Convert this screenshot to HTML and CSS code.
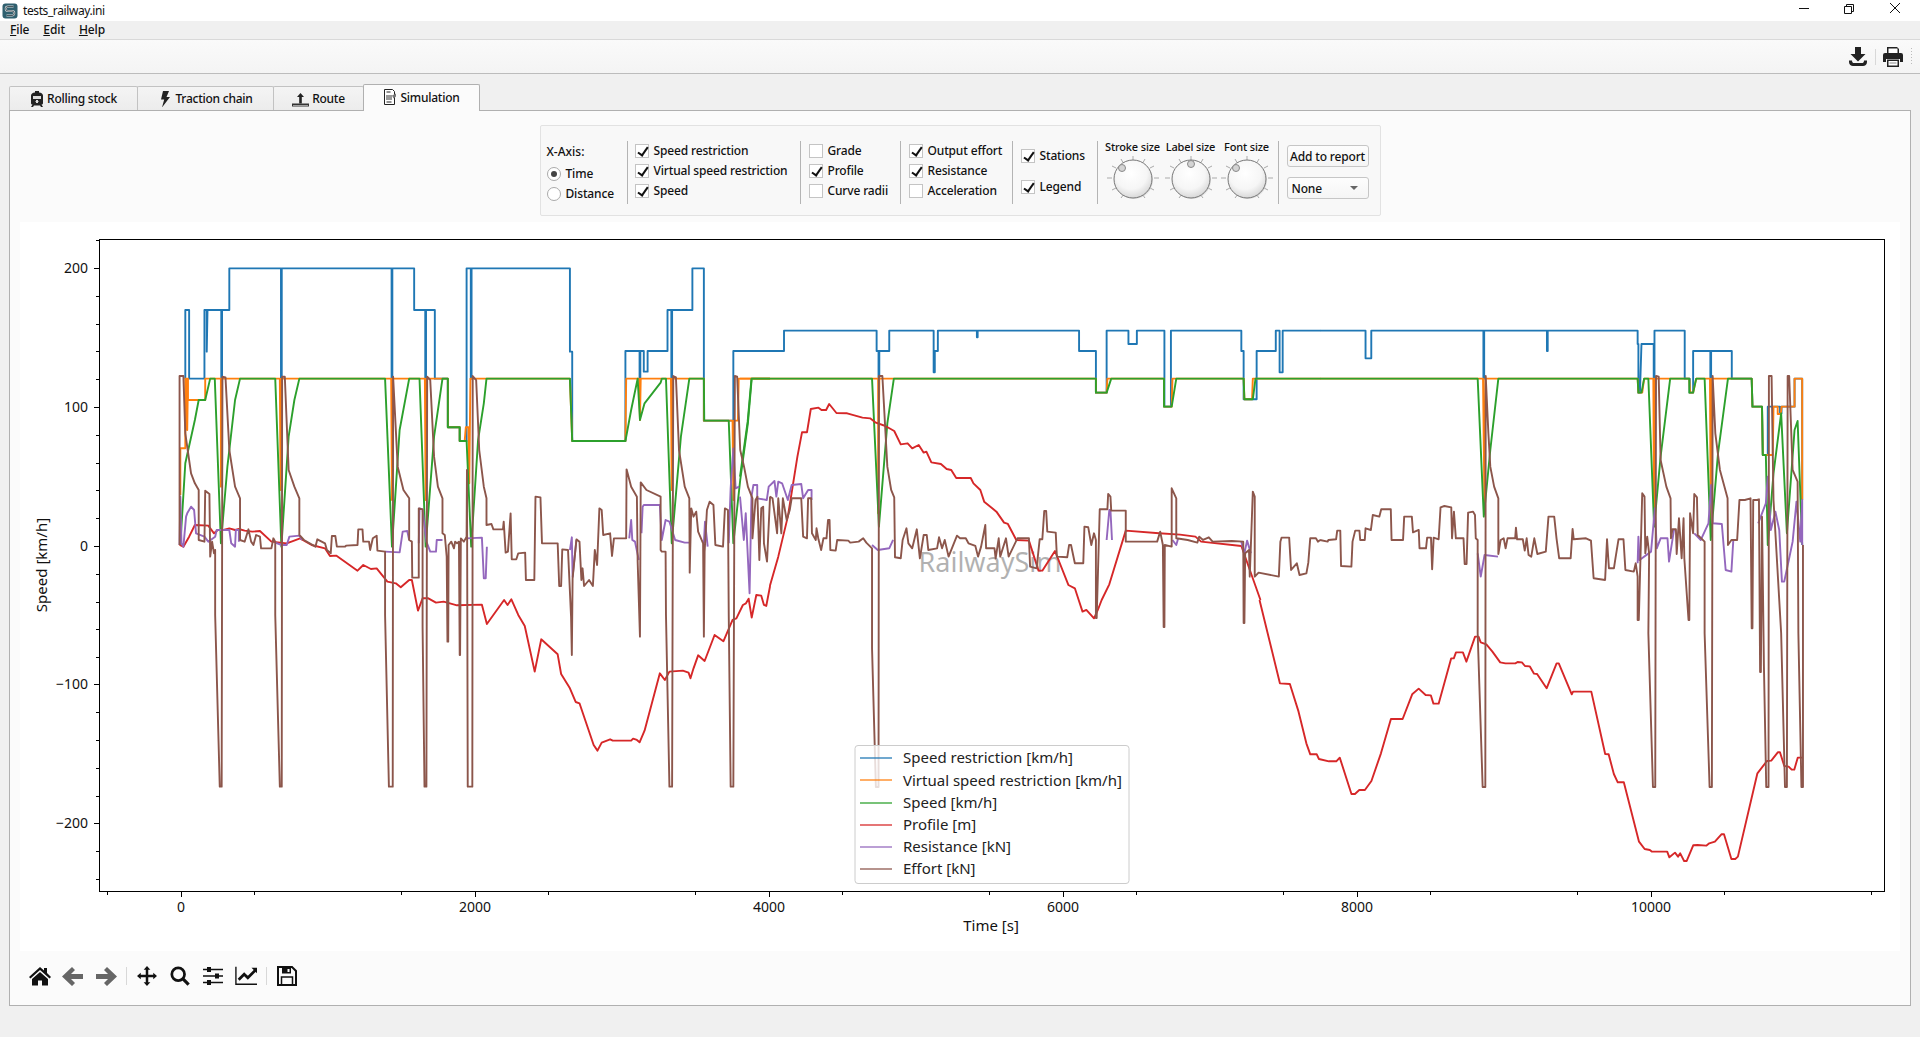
FILE: index.html
```html
<!DOCTYPE html>
<html lang="en">
<head>
<meta charset="utf-8">
<title>tests_railway.ini</title>
<link rel="stylesheet" href="styles.css">
</head>
<body>
<div class="app">
  <header class="titlebar">
    <svg class="appicon" viewBox="0 0 16 16"><rect x="0.5" y="0.5" width="15" height="15" rx="3" fill="#2f5f6e"/><path d="M11.5 3.5H6a2 2 0 0 0 0 4.500h4a2 2 0 0 1 0 4.500H4.500" fill="none" stroke="#d5dde0" stroke-width="2"/><path d="M11.500 3.500H6a2 2 0 0 0 0 4.500h4a2 2 0 0 1 0 4.500H4.500" fill="none" stroke="#26343a" stroke-width=".8"/></svg>
    <span class="titletext">tests_railway.ini</span>
    <div class="winbtns">
      <svg class="winbtn" viewBox="0 0 46 20"><path d="M19 8.500h10" stroke="#111" fill="none"/></svg>
      <svg class="winbtn" viewBox="0 0 46 20"><path d="M18.500 6.500h7v7h-7zM20.500 6.500v-2h7v7h-2" stroke="#111" fill="none"/></svg>
      <svg class="winbtn" viewBox="0 0 46 20"><path d="M18 3l10 10M28 3L18 13" stroke="#111" fill="none"/></svg>
    </div>
  </header>
  <nav class="menubar">
    <span class="menuitem"><u>F</u>ile</span>
    <span class="menuitem"><u>E</u>dit</span>
    <span class="menuitem"><u>H</u>elp</span>
  </nav>
  <div class="toolbar">
    <svg class="topicon" viewBox="0 0 20 20"><path d="M7 0h6v7h4.500L10 14.500 2.500 7H7z" fill="#222"/><path d="M1 13.500v1.500c0 2.500 2 4 4 4h10c2 0 4-1.500 4-4v-1.500l-3 0c0 2-1 2.500-2 2.500H6c-1 0-2-.5-2-2.500z" fill="#222"/></svg>
    <span class="topsep"></span>
    <svg class="topicon" viewBox="0 0 20 20"><path d="M4 0h10l2 2v5H4z" fill="#222"/><rect x="5.500" y="1.500" width="9" height="5" fill="#fff"/><path d="M2 6h16a2 2 0 0 1 2 2v7h-3v-3H3v3H0V8a2 2 0 0 1 2-2z" fill="#222"/><path d="M4 12.500h12V20H4z" fill="#222"/><path d="M5.500 14h9v4.500h-9z" fill="#fff"/><path d="M6.500 15.500h7v1h-7z" fill="#888"/></svg>
    <span class="grip"></span>
  </div>
  <main class="workspace">
    <div class="tabs">
      <div class="tab">
        <svg class="tabicon" viewBox="0 0 14 16"><path d="M5 0h4v1.500c2.500 0 4 1.500 4 3V12c0 1-.7 1.500-1.500 1.500l1.500 2.500h-2l-1-1.500H4L3 16H1l1.500-2.500C1.700 13.500 1 13 1 12V4.500c0-1.500 1.500-3 4-3z" fill="#222"/><path d="M3 5h8v3H3z" fill="#ddd"/><path d="M6 9h2v3H6zM5.500 10h3v1h-3z" fill="#ddd"/></svg>
        <span>Rolling stock</span>
      </div>
      <div class="tab">
        <svg class="tabicon" viewBox="0 0 14 16"><path d="M5 0h6L8.500 6H12L4 16.500 6.200 8.500H3z" fill="#222"/></svg>
        <span>Traction chain</span>
      </div>
      <div class="tab">
        <svg class="tabicon tabicon-wide" viewBox="0 0 17 16"><path d="M8.500 2l3.500 4H9.800v6.500H7.200V6H5z" fill="#222"/><path d="M0 12.500h17v3H0z" fill="#333"/><path d="M1 14h15v.8H1z" fill="#bbb"/></svg>
        <span>Route</span>
      </div>
      <div class="tab tab-active">
        <svg class="tabicon" viewBox="0 0 14 16"><path d="M1.500.5h8l2 2v13h-10z" fill="#fff" stroke="#222"/><path d="M3.500 3h4M3.500 13h5" stroke="#222"/><path d="M3 6h6v5H3z" fill="#999"/><path d="M9 6.500l4-2v3l-2.500 2z" fill="#777"/></svg>
        <span>Simulation</span>
      </div>
    </div>
    <section class="pane">
      <div class="controlrow">
        <form class="controls">
          <div class="group group-axis">
            <span class="axislabel">X-Axis:</span>
            <label class="opt"><span class="radio radio-on"></span>Time</label>
            <label class="opt"><span class="radio"></span>Distance</label>
          </div>
          <div class="group group-speed">
            <label class="opt"><span class="check check-on"></span>Speed restriction</label>
            <label class="opt"><span class="check check-on"></span>Virtual speed restriction</label>
            <label class="opt"><span class="check check-on"></span>Speed</label>
          </div>
          <div class="group group-profile">
            <label class="opt"><span class="check"></span>Grade</label>
            <label class="opt"><span class="check check-on"></span>Profile</label>
            <label class="opt"><span class="check"></span>Curve radii</label>
          </div>
          <div class="group group-effort">
            <label class="opt"><span class="check check-on"></span>Output effort</label>
            <label class="opt"><span class="check check-on"></span>Resistance</label>
            <label class="opt"><span class="check"></span>Acceleration</label>
          </div>
          <div class="group group-extra">
            <label class="opt"><span class="check check-on"></span>Stations</label>
            <label class="opt"><span class="check check-on"></span>Legend</label>
          </div>
          <div class="group group-knobs">
            <div class="knob knob-stroke">
              <span class="knoblabel">Stroke size</span>
              <svg class="knobsvg" viewBox="0 0 52 44"><use href="#knobface"/><circle cx="15" cy="12" r="3.500" class="knobdot"/></svg>
            </div>
            <div class="knob knob-label">
              <span class="knoblabel">Label size</span>
              <svg class="knobsvg" viewBox="0 0 52 44"><use href="#knobface"/><circle cx="26" cy="8" r="3.500" class="knobdot"/></svg>
            </div>
            <div class="knob knob-font">
              <span class="knoblabel">Font size</span>
              <svg class="knobsvg" viewBox="0 0 52 44"><use href="#knobface"/><circle cx="15" cy="12" r="3.500" class="knobdot"/></svg>
            </div>
          </div>
          <div class="group group-report">
            <span class="btn">Add to report</span>
            <span class="combo">None<i class="caret"></i></span>
          </div>
        </form>
      </div>

      <svg class="defs" width="0" height="0" aria-hidden="true">
        <defs>
          <radialGradient id="knobgrad" cx="45%" cy="35%" r="70%">
            <stop offset="0" stop-color="#ffffff"/><stop offset=".6" stop-color="#f6f6f6"/><stop offset="1" stop-color="#d2d2d2"/>
          </radialGradient>
          <g id="knobface">
            <path d="M26 0v4M14 3l2 3.500M38 3l-2 3.500M5 10l4 2M47 10l-4 2M0 22h5M47 22h5M5 34l4-2M47 34l-4-2M14 42l3-4M38 42l-3-4" stroke="#aaa" fill="none"/>
            <circle cx="27" cy="24" r="19" fill="#ccc" opacity=".5"/>
            <circle cx="26" cy="23" r="19" fill="url(#knobgrad)" stroke="#777"/>
          </g>
        </defs>
      </svg>

      <div class="figure">
        <svg class="plot" viewBox="20 222 1880 729">
          <!-- axes ticks -->
          <path class="ticks" d="M107.500 891v4M254.500 891v4M401.500 891v4M548.500 891v4M695.500 891v4M842.500 891v4M989.500 891v4M1136.500 891v4M1283.500 891v4M1430.500 891v4M1577.500 891v4M1724.500 891v4M1871.500 891v4"/>
          <path class="ticks" d="M181.500 891v6M475.500 891v6M769.500 891v6M1063.500 891v6M1357.500 891v6M1651.500 891v6"/>
          <path class="ticks" d="M94 268.500h5M94 407.500h5M94 546.500h5M94 684.500h5M94 823.500h5"/>
          <path class="ticks" d="M96 240.500h3M96 296.500h3M96 324.500h3M96 351.500h3M96 379.500h3M96 435.500h3M96 463.500h3M96 490.500h3M96 518.500h3M96 574.500h3M96 602.500h3M96 629.500h3M96 657.500h3M96 712.500h3M96 740.500h3M96 768.500h3M96 796.500h3M96 851.500h3M96 879.500h3"/>
          <text class="tl yl" x="88" y="273">200</text>
          <text class="tl yl" x="88" y="412">100</text>
          <text class="tl yl" x="88" y="551">0</text>
          <text class="tl yl" x="88" y="689">−100</text>
          <text class="tl yl" x="88" y="828">−200</text>
          <text class="tl xl" x="181" y="912">0</text>
          <text class="tl xl" x="475" y="912">2000</text>
          <text class="tl xl" x="769" y="912">4000</text>
          <text class="tl xl" x="1063" y="912">6000</text>
          <text class="tl xl" x="1357" y="912">8000</text>
          <text class="tl xl" x="1651" y="912">10000</text>
          <text class="al" x="991" y="931">Time [s]</text>
          <text class="al" transform="translate(47 565) rotate(-90)">Speed [km/h]</text>
          <text class="watermark" x="990" y="572">RailwaySim</text>

          <!-- series traced in horizontal sections -->
          <g class="sec-a">
            <polyline class="s s-blue" points="40,386 40,180 50,180 50,386 90,386 90,180 96,180 96,305 98,180 134,180 134,386 136,386 136,180 155,180 155,55 290,55 290,386 292,386 292,55 579,55 579,386 581,386 581,55 638,55 638,180 667,180 667,386 669,386 669,180 692,180 692,386 726,386 726,532 757,532 757,573 775,573 775,55 786,55 786,386 788,386 788,55 1045,55 1045,305 1051,305 1051,573 1190,573 1190,303 1227,303 1227,386 1229,386 1229,303 1238,303 1238,365 1248,365 1248,303 1300,303 1300,180 1310,180 1310,386 1312,386 1312,180 1365,180 1365,55 1395,55 1395,512 1472,512 1472,303 1568,303"/>
            <polyline class="s s-orange" points="27,735 27,595 40,595 40,386 45,386 45,540 47,386 47,450 92,450 92,386 133,386 133,710 135,386 287,386 289,720 291,386 578,386 580,750 582,386 666,386 668,750 670,386 726,386 726,532 757,532 757,573 770,573 773,532 780,532 782,700 785,386 1045,386 1051,573 1190,573 1192,386 1226,386 1228,510 1230,386 1309,386 1311,720 1313,386 1395,386 1395,512 1470,512 1472,750 1474,512 1484,512 1486,386 1568,386"/>
            <polyline class="s s-green" points="27,885 40,640 65,510 75,450 92,450 105,386 117,386 133,880 150,650 170,450 183,386 275,386 291,890 310,560 325,450 338,386 562,386 580,890 600,540 625,386 652,386 668,890 690,560 712,386 726,386 726,532 757,532 757,573 775,573 787,890 805,570 820,460 827,386 1045,386 1051,573 1190,573 1205,480 1222,386 1228,510 1240,460 1282,398 1285,386 1296,386 1311,880 1335,560 1357,386 1395,386 1396,512 1460,512 1472,880 1490,690 1510,520 1520,386 1568,386"/>
          </g>
          <g class="sec-b">
            <polyline class="s s-blue" points="78,153 115,153 115,92 357,92 357,153 362,153 362,236 364,236 364,153 390,153 390,92 506,92 506,217 509,217 509,153 517,153 517,92 619,92 619,112 621,112 621,92 886,92 886,153 930,153 930,278 958,278 958,92 1015,92 1015,132 1037,132 1037,92 1109,92 1109,320 1126,320 1126,92 1310,92 1310,153 1316,153 1316,298 1350,298 1350,153 1400,153 1400,92 1410,92 1410,217 1418,217 1418,92 1516,92"/>
            <polyline class="s s-orange" points="0,236 345,236 361,236 361,640 364,236 402,236 930,236 930,278 958,278 960,236 1108,236 1108,320 1128,320 1130,236 1316,236 1318,298 1338,298 1340,236 1516,236"/>
            <polyline class="s s-green" points="0,530 20,365 30,236 345,236 363,680 385,370 402,236 930,236 930,278 958,278 970,236 1108,236 1108,320 1128,320 1140,236 1316,236 1318,298 1340,298 1347,236 1516,236"/>
          </g>
          <g class="sec-c">
            <polyline class="s s-blue" points="0,92 119,92 119,175 134,175 134,92 427,92 427,236 429,236 429,92 593,92 593,153 595,153 595,92 830,92 830,132 832,132 832,278 836,278 840,132 872,132 872,236 874,236 874,92 953,92 953,236 966,236 966,278 975,278 975,153 1020,153 1020,236 1022,236 1022,153 1076,153 1076,236 1128,236 1130,320 1155,320 1157,465 1170,465 1170,320 1202,320 1202,340 1206,340 1206,320 1240,320 1240,236 1260,236 1260,600"/>
            <polyline class="s s-orange" points="0,236 426,236 430,640 432,236 466,236 830,236 832,278 842,278 847,236 871,236 873,660 875,236 915,236 965,236 967,278 975,278 983,236 1019,236 1021,680 1023,236 1066,236 1128,236 1130,320 1155,320 1157,465 1183,465 1185,320 1196,320 1196,342 1204,342 1206,320 1240,320 1240,236 1260,236 1260,600"/>
            <polyline class="s s-green" points="0,236 412,236 428,650 445,450 466,236 830,236 832,278 840,278 847,236 858,236 873,680 890,470 915,236 965,236 965,278 975,278 983,236 1005,236 1021,720 1040,460 1066,236 1128,236 1130,320 1155,320 1157,465 1165,465 1170,735 1185,520 1205,340 1220,700 1240,390 1248,363 1260,735"/>
          </g>
          <g class="sec-a2">
            <polyline class="s s-red" points="25,135 35,140 50,110 65,75 100,77 115,100 125,90 140,90 155,85 170,90 180,87 195,92 215,95 235,93 265,125 305,130 340,115 370,135 405,145 418,168 435,167 490,212 505,195 525,207 540,205 568,245 590,250 603,262 625,240 632,240 648,332 660,295 675,295 695,308 715,305 750,316 815,314 828,372 873,300 882,315 892,298 910,345 927,378 953,515 970,418 1013,463 1022,522 1045,565 1060,606 1070,610 1107,735 1117,752 1128,728 1150,718 1157,722 1205,722 1210,716 1220,720 1227,727 1240,692 1280,520 1293,540 1305,515 1340,512 1355,518 1360,535 1368,505 1380,466 1397,483 1423,405 1446,424 1470,360 1480,355 1497,315 1505,310 1512,296 1520,353 1532,285 1545,287 1552,315 1558,318 1568,258"/>
          </g>
          <g class="sec-b">
            <polyline class="s s-red" points="78,858 100,770 125,650 150,470 162,397 175,397 185,327 205,323 213,330 225,330 233,312 252,339 280,340 320,353 340,355 355,368 380,378 403,393 420,433 438,430 450,445 467,435 480,458 487,455 500,487 525,492 540,507 552,510 565,534 603,534 610,550 628,570 638,605 670,635 690,668 700,672 722,720 755,722 780,812 790,812 823,753 858,855 875,865 885,900 895,935 905,930 925,955 935,930 945,900 965,853 1008,692 1095,700 1150,704 1190,710 1205,725 1310,738 1360,900"/>
          </g>
          <g class="sec-d">
            <polyline class="s s-red" points="45,0 92,250 115,252 135,335 153,430 162,463 177,463 182,477 205,484 222,484 230,473 257,582 265,582 275,570 288,570 303,543 325,460 348,357 375,357 397,283 412,266 428,285 440,286 446,311 458,311 487,175 493,175 498,157 514,157 522,185 542,110 550,110 555,127 568,133 582,155 600,187 612,190 635,190 640,186 650,187 657,198 668,199 678,221 685,222 707,265 730,190 735,190 765,283 768,275 810,275 842,462 850,463 862,522 871,547 885,547 920,725 933,747 945,750 950,755 985,755 990,772 1003,758 1010,770 1015,760 1024,783 1030,783 1045,736 1055,735 1075,737 1082,730 1095,725 1110,703 1116,703 1133,777 1142,777 1148,770 1193,520 1215,483 1225,482 1240,457 1245,457 1255,498 1265,500 1272,509 1278,509 1286,473 1297,473"/>
          </g>
          <g class="sec-a2">
            <polyline class="s s-purple" points="25,135 27,-10 30,130 35,140 42,50 45,40 55,20 63,30 68,100 90,110 100,125 118,110 122,90 155,90 160,130 170,140 172,90 180,90 180,125"/>
            <polyline class="s s-purple" points="275,128 292,135 305,135 312,110 338,107 345,120"/>
            <polyline class="s s-purple" points="562,155 600,157 608,95 620,93 625,120"/>
            <polyline class="s s-purple" points="650,130 652,25 660,28 670,125 680,155 695,155 697,120 712,120"/>
            <polyline class="s s-purple" points="775,115 815,113 820,235 825,235 828,140"/>
            <polyline class="s s-purple" points="1045,150 1050,112 1052,230 1062,120"/>
            <polyline class="s s-purple" points="1200,115 1205,60 1208,120 1215,125 1225,180"/>
            <polyline class="s s-purple" points="1232,100 1235,20 1238,15 1280,15 1285,120 1295,60 1305,65 1320,120 1345,128 1357,128"/>
            <polyline class="s s-purple" points="1395,130 1398,65 1405,140"/>
            <polyline class="s s-purple" points="1460,130 1465,-35 1472,-155 1478,-35 1487,-40"/>
          </g>
          <g class="sec-b">
            <polyline class="s s-purple" points="0,590 10,720 15,640 25,880 30,590 35,555 45,555 45,595 70,600 75,560 90,543 95,590 100,545 110,550 125,600 135,555 160,552 165,595 178,570 187,570 187,600"/>
            <polyline class="s s-purple" points="345,735 360,750 390,745 400,720"/>
            <polyline class="s s-purple" points="958,720 965,630 968,630 972,720"/>
            <polyline class="s s-purple" points="1130,720 1140,735 1145,715"/>
            <polyline class="s s-purple" points="1310,725 1318,760 1325,722 1335,760"/>
          </g>
          <g class="sec-c">
            <polyline class="s s-purple" points="412,760 420,830 430,765 465,770"/>
            <polyline class="s s-purple" points="830,790 832,710 835,780 865,755 875,625 880,745 890,715 908,715 912,785 925,690"/>
            <polyline class="s s-purple" points="978,700 995,720 1015,670 1022,555 1026,670 1050,672 1060,810 1075,815 1080,720"/>
            <polyline class="s s-purple" points="1145,670 1165,610 1170,530 1178,690 1190,635 1200,690 1207,845 1213,845 1225,780 1235,725 1245,605 1255,725 1260,600 1260,735"/>
          </g>
          <g class="sec-a2">
            <polyline class="s s-brown" points="25,135 25,-372 35,-372 40,-200 55,-80 65,-50 75,-30 75,120 90,125 92,-28 103,-18 105,170 110,125 115,160 118,150 118,345 130,860 135,860 137,-370 145,-368 155,-150 170,-40 183,-5 183,120 195,125 205,88 212,125 218,135 225,105 235,110 238,145 265,145 270,115 275,125 275,345 287,860 292,860 293,-370 300,-370 310,-90 325,-40 338,-5 338,105 350,120 380,140 385,118 405,130 410,150 420,160 423,108 432,108 436,140 457,140 460,137 490,135 492,88 503,88 505,125 520,125 523,150 530,115 540,107 542,152 562,155 562,345 572,860 582,860 583,-370 595,-100 610,-30 625,-5 625,120 632,125 633,233 650,233 650,25 660,28 660,380 665,860 670,860 672,-370 680,-360 690,-130 700,-40 712,-5 712,100 718,105 723,170 725,425 727,425 728,135 735,125 742,145 745,125 750,130 755,125 757,465 758,465 760,115 768,125 775,110 776,-90 778,860 790,860 791,-372 800,-360 808,-150 820,-40 827,-5 827,75 840,72 845,88 870,88 872,65 877,158 883,155 890,40 893,178 905,178 910,160 928,158 930,240 952,240 955,-10 968,-8 972,130 1013,130 1017,258 1022,258 1025,148 1040,150 1048,350 1050,465 1052,235 1062,118 1070,125 1075,240 1078,205 1082,258 1095,240 1105,258 1110,150 1116,195 1122,25 1128,30 1132,105 1150,100 1155,168 1160,115 1192,115 1193,-92 1205,-40 1220,-10 1222,185 1228,410 1230,-53 1245,-30 1282,-10 1282,150 1285,155 1295,155 1296,345 1305,860 1312,860 1315,-372 1322,-368 1330,-150 1345,-40 1357,-5 1358,218 1362,25 1368,50 1375,35 1380,95 1393,130 1395,410 1397,155 1403,30 1410,5 1420,15 1425,135 1445,140 1450,25 1458,30 1460,345 1465,860 1472,860 1476,-372 1482,-370 1490,-150 1500,-100 1510,-40 1522,-5 1522,115 1530,0 1535,-10 1540,180 1545,25 1550,20 1552,130 1560,185 1568,-10"/>
          </g>
          <g class="sec-b">
            <polyline class="s s-brown" points="78,590 85,595 97,700 100,595 108,700 112,595 122,660 130,630 135,595 160,595 165,710 175,715 178,595 186,595 188,700 198,720 200,685 205,718 212,750 218,715 226,715 230,660 234,660 236,750 250,752 254,720 283,722 288,728 310,725 322,715 330,728 345,745 345,1045 355,1461 362,1461 363,228 372,228 385,500 395,570 403,592 405,772 420,775 425,720 435,685 440,730 450,745 462,688 470,775 480,705 488,705 492,750 515,745 520,712 528,745 535,720 545,770 567,707 575,715 590,715 597,730 615,738 622,770 630,740 641,675 643,745 665,745 668,775 676,715 680,770 695,715 702,770 725,715 755,715 758,800 775,805 783,718 790,718 795,633 800,633 803,695 825,698 828,770 855,772 860,735 865,735 875,790 897,790 900,680 910,682 918,735 925,700 930,720 930,954 932,954 940,628 960,628 962,582 968,590 970,632 1008,632 1008,725 1090,725 1098,695 1105,735 1107,981 1109,981 1110,735 1128,740 1128,565 1140,595 1140,715 1170,720 1195,728 1200,710 1210,720 1225,712 1235,725 1285,723 1315,725 1316,969 1318,969 1320,760 1330,750 1332,830 1340,575 1345,590 1345,830 1355,818 1408,830 1412,725 1415,713 1435,713 1440,810 1455,790 1462,825 1480,820 1485,788 1490,715 1505,715 1510,725 1516,720"/>
          </g>
          <g class="sec-c">
            <polyline class="s s-brown" points="0,720 20,725 22,720 42,718 45,692 53,692 55,798 82,800 85,725 92,692 103,692 105,720 117,720 119,685 133,690 138,645 155,650 160,628 185,628 187,720 217,720 220,650 240,650 243,697 258,690 260,745 277,745 280,713 290,713 293,808 297,713 310,718 315,622 325,618 343,622 345,715 350,635 355,715 375,715 378,792 383,792 387,638 400,635 405,645 407,715 412,720 412,1000 425,1461 432,1461 433,228 440,400 445,500 455,560 466,595 466,762 472,720 480,715 485,745 490,715 510,715 512,683 515,718 530,718 535,752 540,715 545,765 552,770 560,715 568,762 590,755 597,650 612,650 618,715 625,775 655,775 660,687 663,718 695,715 708,722 715,835 745,840 750,718 755,805 768,805 772,775 780,718 793,718 798,810 820,815 825,790 830,830 830,960 833,960 842,580 848,590 850,760 855,710 860,760 858,1000 870,1461 876,1461 878,228 885,230 890,480 905,560 916,595 917,715 921,688 930,688 932,762 938,655 945,775 950,655 952,775 963,960 965,960 967,640 975,700 978,582 985,592 987,705 1005,725 1005,1000 1018,1461 1024,1461 1026,228 1033,400 1045,510 1065,595 1066,735 1075,720 1090,720 1096,600 1110,600 1125,595 1128,985 1130,985 1132,600 1142,600 1147,598 1150,1116 1152,1116 1155,650 1160,1100 1166,1461 1172,1461 1173,228 1180,228 1185,600 1205,1000 1215,1461 1220,1461 1222,228 1226,228 1235,510 1248,545 1250,1000 1258,1461 1262,1461 1262,735"/>
          </g>

          <rect class="frame" x="99.500" y="239.500" width="1785" height="652"/>

          <rect class="legendbox" x="855" y="745.500" width="274" height="138" rx="3"/>
          <path class="lg lg-blue" d="M860 758h32"/>
          <path class="lg lg-orange" d="M860 780h32"/>
          <path class="lg lg-green" d="M860 803h32"/>
          <path class="lg lg-red" d="M860 825h32"/>
          <path class="lg lg-purple" d="M860 847h32"/>
          <path class="lg lg-brown" d="M860 869h32"/>
          <text class="lt" x="903" y="763">Speed restriction [km/h]</text>
          <text class="lt" x="903" y="786">Virtual speed restriction [km/h]</text>
          <text class="lt" x="903" y="808">Speed [km/h]</text>
          <text class="lt" x="903" y="830">Profile [m]</text>
          <text class="lt" x="903" y="852">Resistance [kN]</text>
          <text class="lt" x="903" y="874">Effort [kN]</text>
        </svg>
      </div>

      <div class="navbar">
        <svg class="nav" viewBox="0 0 22 20"><path d="M11 1l4 3.500V2h3v5l4 4-1.500 1.500L11 4 1.500 12.500 0 11z" fill="#111"/><path d="M11 6l8 7v6.500h-6v-5H9v5H3V13z" fill="#111"/></svg>
        <svg class="nav" viewBox="0 0 22 20"><path d="M10 1l3 3-4 4h12v5H9l4 4-3 3L0 10.500z" fill="#666"/></svg>
        <svg class="nav" viewBox="0 0 22 20"><path d="M12 1L9 4l4 4H1v5h12l-4 4 3 3 10-9.500z" fill="#666"/></svg>
        <span class="navsep"></span>
        <svg class="nav" viewBox="0 0 24 24"><path d="M12 0l4 4.500h-2.500V10.500H19.500V8l4.500 4-4.500 4v-2.500h-6v6H16L12 24l-4-4.500h2.500v-6h-6V16L0 12l4.500-4v2.500h6v-6H8z" fill="#111"/></svg>
        <svg class="nav" viewBox="0 0 22 22"><circle cx="9" cy="9" r="7" fill="none" stroke="#111" stroke-width="3"/><path d="M14 14l6.500 6.500" stroke="#111" stroke-width="3.500" fill="none"/></svg>
        <svg class="nav" viewBox="0 0 22 20"><path d="M1 3.500h20M1 10h20M1 16.500h20" stroke="#111" fill="none" stroke-width="1.500"/><path d="M5 1h4v5H5zM13 7.500h4v5h-4zM5 14h4v5H5z" fill="#111"/></svg>
        <svg class="nav" viewBox="0 0 24 20"><path d="M1 0v19h23" fill="none" stroke="#111" stroke-width="1.500"/><path d="M4 14l6-6 4 4 8-8" fill="none" stroke="#111" stroke-width="3"/><path d="M18 1h6v6z" fill="#111"/></svg>
        <span class="navsep"></span>
        <svg class="nav" viewBox="0 0 20 20"><path d="M1 1h14l4 4v14H1z" fill="none" stroke="#111" stroke-width="2"/><path d="M5 1.500h9v6H5z" fill="#111"/><path d="M10.500 3h2v3h-2z" fill="#fff"/><path d="M4.500 11h11v8h-11z" fill="none" stroke="#111" stroke-width="1.500"/></svg>
      </div>
    </section>
  </main>
</div>
</body>
</html>
```
FILE: styles.css
```css
* { box-sizing: border-box; }
html, body { margin: 0; height: 100%; }
body {
  font-family: "Noto Sans", "Lato", sans-serif;
  font-size: 12px;
  font-weight: 500;
  color: #111;
  background: #f0f0f0;
  overflow: hidden;
}
.app { display: flex; flex-direction: column; height: 1037px; }

.titlebar { height: 21px; background: #fff; display: flex; align-items: center; padding-left: 2px; font-weight: 400; }
.appicon { width: 16px; height: 16px; flex: none; }
.titletext { margin-left: 5px; font-size: 12px; letter-spacing: -.4px; }
.winbtns { margin-left: auto; margin-top: -2px; display: flex; padding-right: 2px; }
.winbtn { width: 46px; height: 20px; }

.menubar { height: 19px; display: flex; align-items: center; padding: 0 0 1px 10px; gap: 14px; background: #f0f0f0; border-bottom: 1px solid #d9d9d9; }
.menuitem { font-size: 12px; letter-spacing: -.1px; }

.toolbar { height: 34px; display: flex; align-items: center; justify-content: flex-end; gap: 7px; padding-right: 6px; background: linear-gradient(#fafafa, #f4f4f4); border-bottom: 1px solid #bcbcbc; }
.topicon { width: 20px; height: 20px; }
.topsep { width: 1px; height: 16px; background: #d8d8d8; }
.grip { width: 4px; height: 19px; background: radial-gradient(circle, #bbb 40%, transparent 45%) 0 0 / 3px 3px; }

.workspace { flex: none; padding: 10px 9px 0; }
.tabs { display: flex; align-items: flex-end; height: 26px; position: relative; z-index: 1; }
.tab { height: 24px; display: flex; align-items: center; justify-content: center; gap: 3px; border: 1px solid #c2c2c2; border-bottom: 0; border-radius: 2px 2px 0 0; background: linear-gradient(#f4f4f4, #ececec); font-size: 12px; letter-spacing: -.25px; margin-right: -1px; }
.tab:nth-child(1) { width: 129px; }
.tab:nth-child(2) { width: 137px; }
.tab:nth-child(3) { width: 91px; }
.tab-active { width: 117px; background: #fbfbfb; border-color: #b0b0b0; margin-bottom: -1px; height: 27px; padding-bottom: 2px; }
.tabicon { width: 14px; height: 16px; flex: none; }
.tabicon-wide { width: 17px; }

.pane { width: 1902px; height: 896px; border: 1px solid #b0b0b0; background: #fbfbfb; display: flex; flex-direction: column; }

.controlrow { display: flex; justify-content: center; height: 111px; padding-top: 14px; }
.controls { width: 841px; height: 91px; display: flex; align-items: stretch; padding: 15px 0 11px; background: #f8f8f8; border: 1px solid #e2e2e2; border-radius: 2px; }
.group { border-right: 1px solid #b4b4b4; display: flex; flex-direction: column; justify-content: flex-start; padding-left: 8px; }
.group-axis { width: 87px; padding-left: 6px; }
.group-speed { width: 173px; padding-left: 7px; }
.group-profile { width: 100px; }
.group-effort { width: 112px; }
.group-extra { width: 85px; padding-top: 5px; gap: 11px; }
.group-knobs { width: 181px; flex-direction: row; padding-left: 6px; }
.group-report { flex: 1; border-right: 0; gap: 10px; padding-top: 4px; }

.axislabel { font-size: 12px; line-height: 18px; margin: 2px 0 3px; }
.opt { display: flex; align-items: center; gap: 5px; font-size: 12px; line-height: 20px; letter-spacing: -.15px; white-space: nowrap; }
.radio { width: 14px; height: 14px; border-radius: 50%; border: 1px solid #aaa; background: #fff; flex: none; display: flex; align-items: center; justify-content: center; }
.radio-on::after { content: ""; width: 6px; height: 6px; border-radius: 50%; background: #444; }
.check { width: 14px; height: 14px; border: 1px solid #c4c4c4; background: #fff; flex: none; position: relative; }
.check-on::after { content: ""; position: absolute; left: 4px; top: 0; width: 4px; height: 9px; border: solid #111; border-width: 0 2px 2px 0; transform: rotate(35deg); }

.knob { display: flex; flex-direction: column; align-items: center; margin-top: -1px; }
.knob-stroke { width: 58px; }
.knob-label { width: 58px; }
.knob-font { width: 54px; }
.knoblabel { font-size: 11px; line-height: 14px; letter-spacing: -.15px; white-space: nowrap; }
.knobsvg { width: 52px; height: 44px; margin-top: 2px; flex: none; }
.knobdot { fill: #d4d4d4; stroke: #8a8a8a; }

.btn, .combo { width: 82px; height: 22px; border: 1px solid #c6c6c6; border-radius: 3px; background: linear-gradient(#fdfdfd, #f5f5f5); font-size: 12px; letter-spacing: -.15px; display: flex; align-items: center; padding: 0 4px; white-space: nowrap; }
.btn { justify-content: center; padding: 0; }
.combo { justify-content: space-between; }
.caret { width: 0; height: 0; border: 4px solid transparent; border-top: 4px solid #666; border-bottom: 0; margin-right: 6px; }

.defs { position: absolute; }

.figure { height: 729px; margin: 0 10px; background: #fff; }
.plot { display: block; width: 1880px; height: 729px; }

.sec-a polyline { transform: translate(170px, 250px) scale(.3827, .3333); }
.sec-a2 polyline { transform: translate(170px, 500px) scale(.3827, .3333); }
.sec-b polyline { transform: translate(740px, 300px) scale(.3827, .3333); }
.sec-c polyline { transform: translate(1320px, 300px) scale(.3827, .3333); }
.sec-d polyline { transform: translate(1240px, 600px) scale(.4337, .3333); }

.s { fill: none; stroke-width: 1.9px; stroke-linejoin: round; vector-effect: non-scaling-stroke; }
.s-blue { stroke: #1f77b4; }
.s-orange { stroke: #ff7f0e; }
.s-green { stroke: #2ca02c; }
.s-red { stroke: #d62728; }
.s-purple { stroke: #9467bd; }
.s-brown { stroke: #8c564b; }

.frame { fill: none; stroke: #000; stroke-width: 1; }
.ticks { fill: none; stroke: #000; stroke-width: 1; }
.tl { font-size: 14px; font-weight: 400; fill: #111; font-family: "Noto Sans", sans-serif; }
.al { font-size: 15px; font-weight: 400; fill: #111; text-anchor: middle; font-family: "Noto Sans", sans-serif; }
.yl { text-anchor: end; }
.xl { text-anchor: middle; }
.watermark { font-size: 27px; font-weight: 400; fill: #000; opacity: .3; text-anchor: middle; font-family: "Noto Sans", sans-serif; }

.legendbox { fill: #fff; fill-opacity: .8; stroke: #ccc; stroke-width: 1; }
.lg { fill: none; stroke-width: 1.5; opacity: .85; }
.lg-blue { stroke: #1f77b4; }
.lg-orange { stroke: #ff7f0e; }
.lg-green { stroke: #2ca02c; }
.lg-red { stroke: #d62728; }
.lg-purple { stroke: #9467bd; }
.lg-brown { stroke: #8c564b; }
.lt { font-size: 15px; font-weight: 400; fill: #222; font-family: "Noto Sans", sans-serif; }

.navbar { height: 54px; display: flex; align-items: center; padding: 0 0 4px 19px; gap: 11px; }
.nav { width: 22px; height: 20px; flex: none; }
.navsep { width: 1px; height: 18px; margin: 0 -2px; background: #d8d8d8; }
```
